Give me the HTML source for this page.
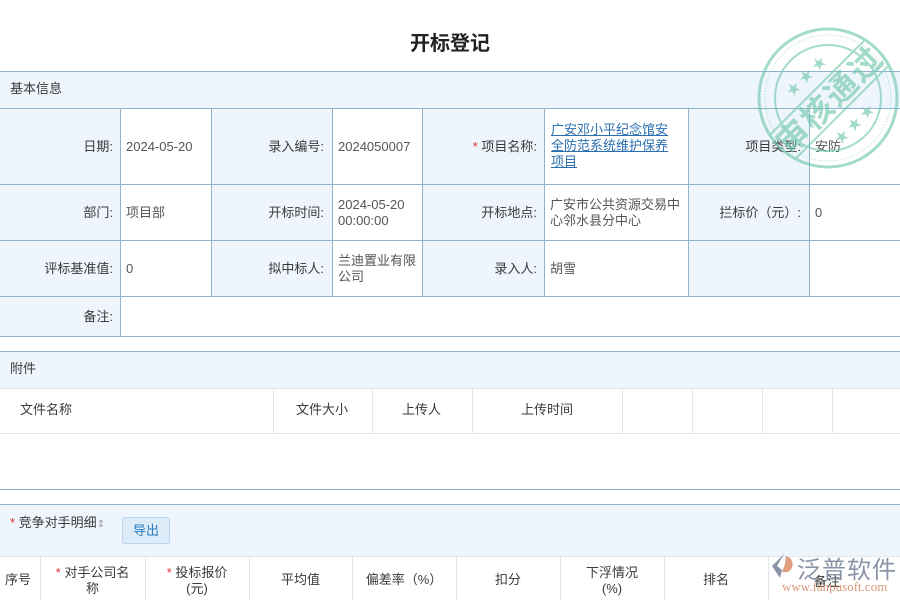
<!DOCTYPE html>
<html><head><meta charset="utf-8"><style>
*{margin:0;padding:0;box-sizing:border-box}
body{width:900px;height:600px;overflow:hidden;background:#fff;font-family:"Liberation Sans","Noto Sans CJK SC",sans-serif;font-size:13px;color:#3a3a3a;position:relative}
.a{position:absolute}
.lb{background:#eef5fc}
.hl{position:absolute;left:0;width:900px;height:1px;background:#8fb3c8}
.vl{position:absolute;width:1px;background:#8fb3c8}
.gl{position:absolute;background:#e2e6ea}
.r{text-align:right}
.t{position:absolute;line-height:16px}
.v{color:#555}
.st{color:#d33}
</style></head><body>
<div class="a" style="left:0;top:27px;width:900px;text-align:center;font-size:20px;font-weight:bold;color:#222">开标登记</div>

<div class="a lb" style="left:0;top:71px;width:900px;height:37px"></div>
<div class="t" style="left:10px;top:81px">基本信息</div>
<div class="a lb" style="left:0;top:108px;width:120px;height:188px"></div>
<div class="a lb" style="left:211px;top:108px;width:121px;height:188px"></div>
<div class="a lb" style="left:422px;top:108px;width:122px;height:188px"></div>
<div class="a lb" style="left:688px;top:108px;width:121px;height:188px"></div>
<div class="a lb" style="left:0;top:296px;width:120px;height:40px"></div>
<div class="hl" style="top:71px"></div><div class="hl" style="top:108px"></div><div class="hl" style="top:184px"></div><div class="hl" style="top:240px"></div><div class="hl" style="top:296px"></div><div class="hl" style="top:336px"></div>
<div class="vl" style="left:120px;top:108px;height:228px"></div>
<div class="vl" style="left:211px;top:108px;height:188px"></div>
<div class="vl" style="left:332px;top:108px;height:188px"></div>
<div class="vl" style="left:422px;top:108px;height:188px"></div>
<div class="vl" style="left:544px;top:108px;height:188px"></div>
<div class="vl" style="left:688px;top:108px;height:188px"></div>
<div class="vl" style="left:809px;top:108px;height:188px"></div>

<div class="t r" style="left:0;width:113px;top:139px">日期:</div>
<div class="t v" style="left:126px;top:139px">2024-05-20</div>
<div class="t r" style="left:211px;width:113px;top:139px">录入编号:</div>
<div class="t v" style="left:338px;top:139px">2024050007</div>
<div class="t r" style="left:422px;width:115px;top:139px"><span class="st">*</span> 项目名称:</div>
<div class="t" style="left:551px;top:122px;width:125px;color:#2a6fb0;text-decoration:underline">广安邓小平纪念馆安全防范系统维护保养项目</div>
<div class="t r" style="left:688px;width:113px;top:139px">项目类型:</div>
<div class="t v" style="left:815px;top:139px">安防</div>

<div class="t r" style="left:0;width:113px;top:205px">部门:</div>
<div class="t v" style="left:126px;top:205px">项目部</div>
<div class="t r" style="left:211px;width:113px;top:205px">开标时间:</div>
<div class="t v" style="left:338px;top:197px">2024-05-20<br>00:00:00</div>
<div class="t r" style="left:422px;width:115px;top:205px">开标地点:</div>
<div class="t v" style="left:550px;top:197px;width:135px">广安市公共资源交易中心邻水县分中心</div>
<div class="t r" style="left:688px;width:113px;top:205px">拦标价（元）:</div>
<div class="t v" style="left:815px;top:205px">0</div>

<div class="t r" style="left:0;width:113px;top:261px">评标基准值:</div>
<div class="t v" style="left:126px;top:261px">0</div>
<div class="t r" style="left:211px;width:113px;top:261px">拟中标人:</div>
<div class="t v" style="left:338px;top:253px;width:82px">兰迪置业有限公司</div>
<div class="t r" style="left:422px;width:115px;top:261px">录入人:</div>
<div class="t v" style="left:550px;top:261px">胡雪</div>
<div class="t r" style="left:0;width:113px;top:309px">备注:</div>

<div class="a lb" style="left:0;top:351px;width:900px;height:37px"></div>
<div class="hl" style="top:351px"></div>
<div class="t" style="left:10px;top:361px">附件</div>
<div class="gl" style="left:0;top:388px;width:900px;height:1px"></div>
<div class="gl" style="left:0;top:433px;width:900px;height:1px"></div>
<div class="gl" style="left:273px;top:388px;width:1px;height:45px"></div>
<div class="gl" style="left:372px;top:388px;width:1px;height:45px"></div>
<div class="gl" style="left:472px;top:388px;width:1px;height:45px"></div>
<div class="gl" style="left:622px;top:388px;width:1px;height:45px"></div>
<div class="gl" style="left:692px;top:388px;width:1px;height:45px"></div>
<div class="gl" style="left:762px;top:388px;width:1px;height:45px"></div>
<div class="gl" style="left:832px;top:388px;width:1px;height:45px"></div>
<div class="t" style="left:20px;top:402px">文件名称</div>
<div class="t" style="left:296px;top:402px">文件大小</div>
<div class="t" style="left:402px;top:402px">上传人</div>
<div class="t" style="left:521px;top:402px">上传时间</div>
<div class="hl" style="top:489px"></div>

<div class="a lb" style="left:0;top:504px;width:900px;height:52px"></div>
<div class="hl" style="top:504px"></div>
<div class="t" style="left:10px;top:515px"><span class="st">*</span> 竞争对手明细<span style="color:#999;font-size:10px">⇕</span></div>
<div class="a" style="left:122px;top:517px;width:48px;height:27px;border:1px solid #b9d6ee;background:#dcecf9;border-radius:3px;color:#2a7bc0;text-align:center;line-height:25px">导出</div>
<div class="gl" style="left:0;top:556px;width:900px;height:1px"></div>
<div class="gl" style="left:40px;top:556px;width:1px;height:44px"></div>
<div class="gl" style="left:145px;top:556px;width:1px;height:44px"></div>
<div class="gl" style="left:249px;top:556px;width:1px;height:44px"></div>
<div class="gl" style="left:352px;top:556px;width:1px;height:44px"></div>
<div class="gl" style="left:456px;top:556px;width:1px;height:44px"></div>
<div class="gl" style="left:560px;top:556px;width:1px;height:44px"></div>
<div class="gl" style="left:664px;top:556px;width:1px;height:44px"></div>
<div class="gl" style="left:768px;top:556px;width:1px;height:44px"></div>
<div class="t" style="left:5px;top:572px">序号</div>
<div class="t" style="left:40px;width:105px;top:565px;text-align:center"><span class="st">*</span> 对手公司名<br>称</div>
<div class="t" style="left:145px;width:104px;top:565px;text-align:center"><span class="st">*</span> 投标报价<br>(元)</div>
<div class="t" style="left:249px;width:103px;top:572px;text-align:center">平均值</div>
<div class="t" style="left:352px;width:104px;top:572px;text-align:center">偏差率（%）</div>
<div class="t" style="left:456px;width:104px;top:572px;text-align:center">扣分</div>
<div class="t" style="left:560px;width:104px;top:565px;text-align:center">下浮情况<br>(%)</div>
<div class="t" style="left:664px;width:104px;top:572px;text-align:center">排名</div>
<div class="t" style="left:814px;top:574px">备注</div>

<svg class="a" style="left:768px;top:552px" width="30" height="28" viewBox="0 0 30 28"><path d="M16 2 L4 14 L12 26 L14 18 L9 14 Z" fill="#8a94a8"/><path d="M18 4 C26 6 27 16 20 20 L14 20 L17 12 Z" fill="#e0a080"/></svg>
<div class="a" style="left:797px;top:550px;font-size:24px;color:#8a94a8;letter-spacing:1px">泛普软件</div>
<div class="a" style="left:782px;top:579px;font-family:'Liberation Serif',serif;font-size:13px;color:#d89878">www.fanpusoft.com</div>

<svg class="a" style="left:750px;top:22px;opacity:.65" width="160" height="155" viewBox="0 0 160 155">
<g transform="translate(78,76)" fill="none" stroke="#72c8ad">
<circle r="69" stroke-width="3"/><circle r="63" stroke-width="1" stroke-dasharray="1 2"/><circle r="53" stroke-width="2"/>
<g transform="rotate(-45)">
<line x1="-66" y1="-15" x2="66" y2="-15" stroke-width="2"/><line x1="-66" y1="20" x2="66" y2="20" stroke-width="2"/>
<text x="0" y="14" text-anchor="middle" fill="#72c8ad" stroke="none" font-size="32" font-weight="bold" font-family="'Noto Sans CJK SC',sans-serif" letter-spacing="2">审核通过</text>
<text x="0" y="-26" text-anchor="middle" fill="#72c8ad" stroke="none" font-size="14">★ ★ ★</text>
<text x="0" y="42" text-anchor="middle" fill="#72c8ad" stroke="none" font-size="14">★ ★ ★</text>
</g></g></svg>
</body></html>
